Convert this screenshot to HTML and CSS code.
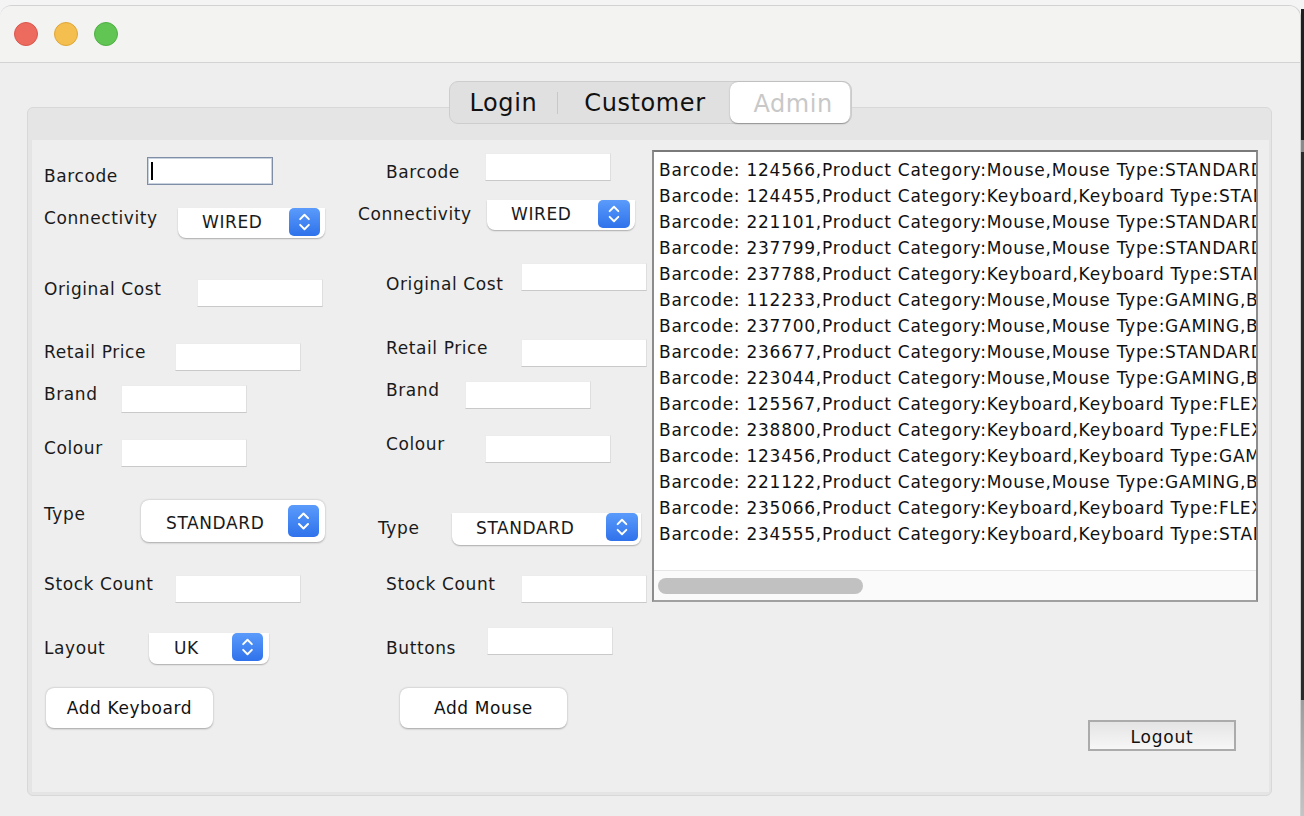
FILE: index.html
```html
<!DOCTYPE html>
<html>
<head>
<meta charset="utf-8">
<link rel="stylesheet" href="styles.css">
</head>
<body>
<div class="desk">
  <div class="window">
    <div class="titlebar">
      <span class="light red"></span>
      <span class="light yellow"></span>
      <span class="light green"></span>
    </div>
    <div class="body">
      <div class="tabs">
        <span class="tab t-login">Login</span>
        <span class="tab-sep"></span>
        <span class="tab t-cust">Customer</span>
        <span class="tab t-admin">Admin</span>
      </div>
      <div class="panel">
        <div class="pane">
          <div class="form kb">
            <div class="row"><span class="lbl">Barcode</span><span class="field focus"><span class="caret"></span></span></div>
            <div class="row"><span class="lbl">Connectivity</span><span class="combo clip cb-conn"><span class="val">WIRED</span><span class="spin top"><svg viewBox="0 0 31 29" width="31" height="28"><path d="M11 11.5 L15.5 7 L20 11.5 M11 17.5 L15.5 22 L20 17.5" fill="none" stroke="#fff" stroke-width="2" stroke-linecap="round" stroke-linejoin="round"/></svg></span></span></div>
            <div class="row"><span class="lbl">Original Cost</span><span class="field"></span></div>
            <div class="row"><span class="lbl">Retail Price</span><span class="field"></span></div>
            <div class="row"><span class="lbl">Brand</span><span class="field"></span></div>
            <div class="row"><span class="lbl">Colour</span><span class="field"></span></div>
            <div class="row"><span class="lbl">Type</span><span class="combo full cb-type"><span class="val">STANDARD</span><span class="spin"><svg viewBox="0 0 31 29" width="31" height="32"><path d="M11 11.5 L15.5 7 L20 11.5 M11 17.5 L15.5 22 L20 17.5" fill="none" stroke="#fff" stroke-width="2" stroke-linecap="round" stroke-linejoin="round"/></svg></span></span></div>
            <div class="row"><span class="lbl">Stock Count</span><span class="field"></span></div>
            <div class="row"><span class="lbl">Layout</span><span class="combo clip cb-layout"><span class="val">UK</span><span class="spin top"><svg viewBox="0 0 31 29" width="31" height="28"><path d="M11 11.5 L15.5 7 L20 11.5 M11 17.5 L15.5 22 L20 17.5" fill="none" stroke="#fff" stroke-width="2" stroke-linecap="round" stroke-linejoin="round"/></svg></span></span></div>
            <div class="row"><button class="btn">Add Keyboard</button></div>
          </div>
          <div class="form ms">
            <div class="row"><span class="lbl">Barcode</span><span class="field"></span></div>
            <div class="row"><span class="lbl">Connectivity</span><span class="combo clip cb-conn"><span class="val">WIRED</span><span class="spin top"><svg viewBox="0 0 31 29" width="32" height="28"><path d="M11 11.5 L15.5 7 L20 11.5 M11 17.5 L15.5 22 L20 17.5" fill="none" stroke="#fff" stroke-width="2" stroke-linecap="round" stroke-linejoin="round"/></svg></span></span></div>
            <div class="row"><span class="lbl">Original Cost</span><span class="field"></span></div>
            <div class="row"><span class="lbl">Retail Price</span><span class="field"></span></div>
            <div class="row"><span class="lbl">Brand</span><span class="field"></span></div>
            <div class="row"><span class="lbl">Colour</span><span class="field"></span></div>
            <div class="row"><span class="lbl">Type</span><span class="combo clip cb-type"><span class="val">STANDARD</span><span class="spin top"><svg viewBox="0 0 31 29" width="32" height="28"><path d="M11 11.5 L15.5 7 L20 11.5 M11 17.5 L15.5 22 L20 17.5" fill="none" stroke="#fff" stroke-width="2" stroke-linecap="round" stroke-linejoin="round"/></svg></span></span></div>
            <div class="row"><span class="lbl">Stock Count</span><span class="field"></span></div>
            <div class="row"><span class="lbl">Buttons</span><span class="field"></span></div>
            <div class="row"><button class="btn">Add Mouse</button></div>
          </div>
          <div class="side">
            <div class="list">
              <div class="items">
                <div class="item">Barcode: 124566,Product Category:Mouse,Mouse Type:STANDARD,Brand</div>
                <div class="item">Barcode: 124455,Product Category:Keyboard,Keyboard Type:STANDARD</div>
                <div class="item">Barcode: 221101,Product Category:Mouse,Mouse Type:STANDARD,Brand</div>
                <div class="item">Barcode: 237799,Product Category:Mouse,Mouse Type:STANDARD,Brand</div>
                <div class="item">Barcode: 237788,Product Category:Keyboard,Keyboard Type:STANDARD</div>
                <div class="item">Barcode: 112233,Product Category:Mouse,Mouse Type:GAMING,Brand</div>
                <div class="item">Barcode: 237700,Product Category:Mouse,Mouse Type:GAMING,Brand</div>
                <div class="item">Barcode: 236677,Product Category:Mouse,Mouse Type:STANDARD,Brand</div>
                <div class="item">Barcode: 223044,Product Category:Mouse,Mouse Type:GAMING,Brand</div>
                <div class="item">Barcode: 125567,Product Category:Keyboard,Keyboard Type:FLEXIBLE</div>
                <div class="item">Barcode: 238800,Product Category:Keyboard,Keyboard Type:FLEXIBLE</div>
                <div class="item">Barcode: 123456,Product Category:Keyboard,Keyboard Type:GAMING</div>
                <div class="item">Barcode: 221122,Product Category:Mouse,Mouse Type:GAMING,Brand</div>
                <div class="item">Barcode: 235066,Product Category:Keyboard,Keyboard Type:FLEXIBLE</div>
                <div class="item">Barcode: 234555,Product Category:Keyboard,Keyboard Type:STANDARD</div>
              </div>
              <div class="hscroll"><span class="thumb"></span></div>
            </div>
            <button class="logout">Logout</button>
          </div>
        </div>
      </div>
    </div>
  </div>
  <div class="edge"></div>
</div>
</body>
</html>
```
FILE: styles.css
```css
* { box-sizing: border-box; }
html, body { margin: 0; padding: 0; }
body {
  width: 1304px;
  height: 816px;
  overflow: hidden;
  background: #f4f4f4;
  font-family: "DejaVu Sans", "Liberation Sans", sans-serif;
  font-size: 17px;
  letter-spacing: 0.6px;
  color: #1a1a1a;
}
.desk { display: flex; height: 816px; }
.window {
  width: 1301px;
  margin-top: 5px;
  height: 811px;
  background: #eeeeee;
  border-radius: 12px 12px 0 0;
  border-top: 1px solid #d2d2d2;
  border-right: 1px solid #cfcfcf;
  display: flex;
  flex-direction: column;
  overflow: hidden;
}
.edge {
  width: 3px;
  background: linear-gradient(#f4f4f4 0, #f4f4f4 9px, #1f1f1f 9px, #1f1f1f 140px, #8a8a8a 140px, #8a8a8a 152px, #2a2a2a 152px, #2a2a2a 700px, #9c9c9c 700px, #c4c4c4 816px);
}
.titlebar {
  height: 57px;
  flex-shrink: 0;
  background: #f3f3f2;
  border-bottom: 1px solid #d3d3d3;
  display: flex;
  align-items: center;
  gap: 16px;
  padding-left: 14px;
}
.light { width: 24px; height: 24px; border-radius: 50%; }
.red { background: #ed6a5e; border: 1px solid #d9574c; }
.yellow { background: #f5bf4f; border: 1px solid #dea63a; }
.green { background: #61c554; border: 1px solid #4faf43; }

.body {
  flex: 1;
  display: flex;
  flex-direction: column;
  align-items: center;
}
.tabs {
  margin-top: 18px;
  margin-bottom: -17px;
  position: relative;
  z-index: 1;
  width: 403px;
  height: 43px;
  display: flex;
  align-items: center;
  background: #e0e0e0;
  border: 1px solid #cdcdcd;
  border-radius: 9px;
  font-size: 24px;
  letter-spacing: 0.6px;
  color: #111;
}
.tab { display: flex; justify-content: center; align-items: center; height: 100%; }
.t-login { width: 108px; }
.tab-sep { width: 1px; height: 22px; background: #c8c8c8; margin-right: 2px; }
.t-cust { width: 170px; }
.t-admin {
  width: 121px;
  height: 41px;
  background: #fff;
  border-radius: 8px;
  color: #c8c8c8;
  padding-left: 6px;
  padding-top: 3px;
  box-shadow: 0 0.5px 1.5px rgba(0,0,0,0.3);
}
.panel {
  align-self: stretch;
  margin: 0 28px 0 27px;
  height: 689px;
  background: #e5e5e5;
  border: 1px solid #d8d8d8;
  border-radius: 6px;
  padding: 32px 2px 2px 3px;
}
.pane {
  height: 100%;
  background: #eeeeee;
  display: flex;
  box-shadow: inset 1px 0 0 #e4e4e4, inset 0 -1px 0 #e4e4e4;
}
.form { display: grid; align-content: start; }
.kb {
  width: 327px;
  padding-left: 13px;
  padding-top: 17px;
  grid-template-rows: 51px 71px 64px 42px 54px 61px 75px 58px 55px auto;
}
.ms {
  width: 294px;
  padding-top: 13px;
  grid-template-rows: 47px 63px 76px 42px 54px 78px 62px 52px 61px auto;
}
.row { display: flex; align-items: flex-start; }
.lbl { flex-shrink: 0; line-height: 20px; white-space: nowrap; }

.kb .row:nth-child(1) .lbl { width: 103px; margin-top: 9px; }
.kb .row:nth-child(2) .lbl { width: 134px; margin-top: 0; }
.kb .row:nth-child(3) .lbl { width: 153px; margin-top: 0; }
.kb .row:nth-child(4) .lbl { width: 131px; margin-top: -1px; }
.kb .row:nth-child(5) .lbl { width: 77px; margin-top: -1px; }
.kb .row:nth-child(6) .lbl { width: 77px; margin-top: -1px; }
.kb .row:nth-child(7) .lbl { width: 97px; margin-top: 4px; }
.kb .row:nth-child(8) .lbl { width: 131px; margin-top: -1px; }
.kb .row:nth-child(9) .lbl { width: 105px; margin-top: 5px; }
.kb .row:nth-child(10) .btn { margin-left: 2px; }

.ms .lbl { padding-left: 28px; }
.ms .row:nth-child(1) .lbl { width: 127px; margin-top: 9px; }
.ms .row:nth-child(2) .lbl { width: 129px; margin-top: 4px; padding-left: 0; }
.ms .row:nth-child(3) .lbl { width: 163px; margin-top: 11px; }
.ms .row:nth-child(4) .lbl { width: 163px; margin-top: -1px; }
.ms .row:nth-child(5) .lbl { width: 107px; margin-top: -1px; }
.ms .row:nth-child(6) .lbl { width: 127px; margin-top: -1px; }
.ms .row:nth-child(7) .lbl { width: 94px; margin-top: 5px; padding-left: 20px; }
.ms .row:nth-child(8) .lbl { width: 163px; margin-top: -1px; }
.ms .row:nth-child(9) .lbl { width: 129px; margin-top: 11px; }
.ms .row:nth-child(10) .btn { margin-left: 42px; }

.field {
  width: 126px;
  height: 28px;
  background: #fff;
  border: 1px solid #ececec;
  border-bottom-color: #c9c9c9;
  border-right-color: #dedede;
  display: flex;
  align-items: center;
}
.field.focus {
  border: 1px solid #7f8ea6;
  box-shadow: inset 0 0 0 1px #c9d2df;
}
.caret { width: 2px; height: 18px; background: #000; margin-left: 3px; }

.combo {
  background: #fff;
  display: flex;
  align-items: center;
  padding-left: 24px;
  flex-shrink: 0;
}
.combo.clip { border-radius: 0 0 8px 8px; box-shadow: 0 1px 1.5px rgba(0,0,0,0.28); }
.combo.full { border-radius: 8px; box-shadow: 0 0.5px 2px rgba(0,0,0,0.3); }
.val { line-height: 20px; margin-top: -2px; }
.spin {
  margin-left: auto;
  border-radius: 5px;
  background: linear-gradient(#5a9bfb, #2f72eb);
  display: flex;
}
.spin.top { align-self: flex-start; }
.spin svg { display: block; }
.kb .cb-conn { width: 147px; height: 30px; }
.kb .cb-conn .spin { margin-right: 5px; }
.kb .cb-type { width: 184px; height: 42px; padding-left: 25px; }
.kb .cb-type .spin { margin-right: 6px; }
.kb .cb-type .val { margin-top: 3px; }
.kb .cb-layout { width: 120px; height: 31px; padding-left: 25px; }
.kb .cb-layout .spin { margin-right: 6px; }
.ms .cb-conn { width: 148px; height: 30px; }
.ms .cb-conn .spin { margin-right: 5px; }
.ms .cb-type { width: 189px; height: 32px; }
.ms .cb-type .spin { margin-right: 3px; }

.btn {
  width: 167px;
  height: 40px;
  background: #fff;
  border: none;
  border-radius: 8px;
  box-shadow: 0 0.5px 2px rgba(0,0,0,0.32);
  font: inherit;
  letter-spacing: inherit;
  color: #111;
  padding: 0;
}

.side {
  display: flex;
  flex-direction: column;
  align-items: flex-start;
}
.list {
  margin-top: 10px;
  width: 606px;
  height: 452px;
  border: 2px solid #8c8c8c;
  border-top-color: #7a7a7a;
  border-bottom-color: #a0a0a0;
  background: #fff;
  display: flex;
  flex-direction: column;
  overflow: hidden;
}
.items { height: 418px; padding-top: 5px; padding-left: 5px; overflow: hidden; }
.item { line-height: 26px; white-space: nowrap; overflow: hidden; color: #111; letter-spacing: 0.74px; }
.hscroll {
  height: 30px;
  background: #fafafa;
  border-top: 1px solid #e5e5e5;
  padding: 7px 0 0 4px;
}
.thumb { display: block; width: 205px; height: 16px; border-radius: 8px; background: #c1c1c1; }
.logout {
  margin-top: 118px;
  margin-left: 436px;
  width: 148px;
  height: 31px;
  border: 2px solid #ababab;
  background: linear-gradient(#e4e4e4, #f7f7f7);
  font: inherit;
  letter-spacing: 0.8px;
  color: #111;
  padding: 2px 0 0;
  border-radius: 0;
}
```
